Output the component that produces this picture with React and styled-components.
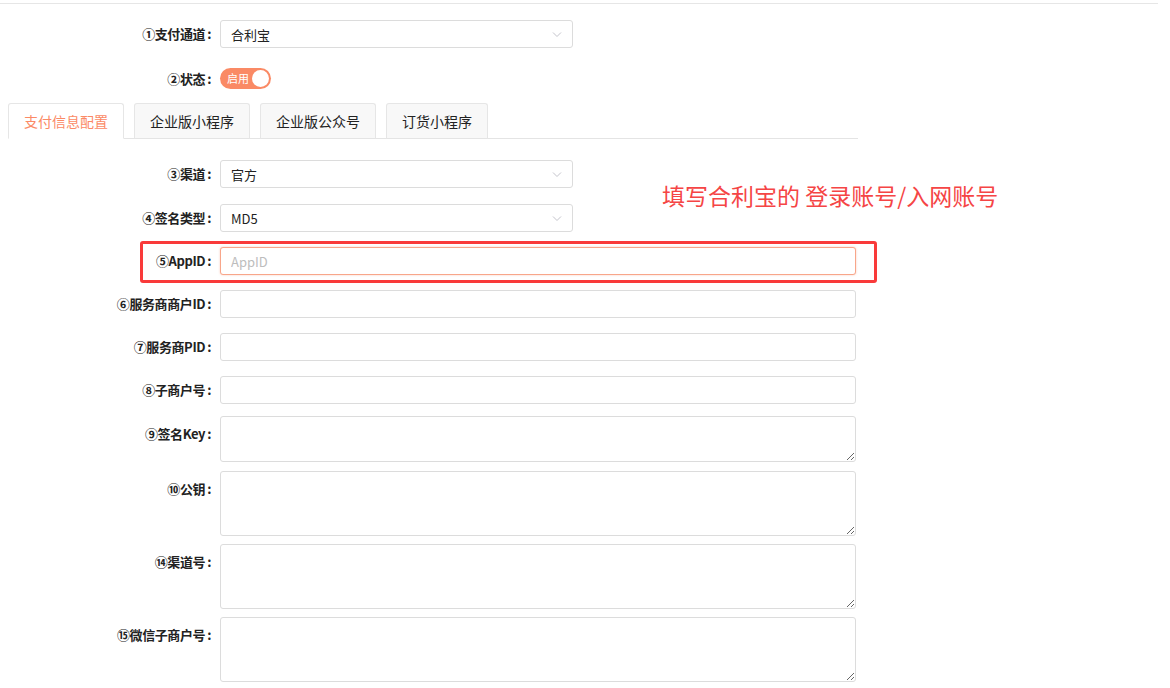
import styled, { createGlobalStyle } from 'styled-components';

const GlobalStyle = createGlobalStyle`
  body {
    margin: 0;
    background: #fff;
    font-family: "Noto Sans CJK SC", "Noto Sans", "Liberation Sans", sans-serif;
    color: #333;
  }
  *, *::before, *::after { box-sizing: border-box; }
`;

const Page = styled.div`
  position: relative;
  width: 1170px;
  min-height: 688px;
  padding-top: 3px;
`;

const TopRule = styled.div`
  height: 1px;
  width: 1158px;
  background: #e6e6e6;
`;

const Form = styled.form`
  width: 860px;
`;

const Row = styled.div`
  position: relative;
  display: grid;
  grid-template-columns: 213px ${(p) => (p.$short ? '353px' : '636px')};
  column-gap: 7px;
  margin-top: ${(p) => p.$top}px;

  ${(p) =>
    p.$marked &&
    `
    &::after {
      content: '';
      position: absolute;
      left: 140px;
      top: -6px;
      width: 737px;
      height: 42px;
      border: 3px solid #f93a3a;
      border-radius: 3px;
      pointer-events: none;
    }
  `}
`;

const Label = styled.label`
  text-align: right;
  font-size: 13px;
  font-weight: 700;
  line-height: 16px;
  letter-spacing: -0.4px;
  color: #222;
  white-space: nowrap;
  padding-right: 2px;
  padding-top: ${(p) => (p.$multi ? 10 : 6)}px;

  &::after {
    content: ':';
    margin-left: 2px;
  }
`;

const SelectBox = styled.div`
  position: relative;
  height: 28px;
  border: 1px solid #dcdcdc;
  border-radius: 3px;
  padding: 0 10px;
  font-size: 13px;
  line-height: 27px;
  color: #222;

  svg {
    position: absolute;
    right: 10px;
    top: 10px;
  }
`;

const TextInput = styled.input`
  height: 28px;
  width: 100%;
  border: 1px solid ${(p) => (p.$focused ? '#f8a68a' : '#dcdcdc')};
  box-shadow: ${(p) => (p.$focused ? '0 0 2px rgba(248, 140, 105, 0.5)' : 'none')};
  border-radius: 3px;
  padding: 0 10px;
  font: inherit;
  font-size: 13px;
  outline: none;

  &::placeholder {
    color: #bdbdbd;
  }
`;

const TextArea = styled.textarea`
  display: block;
  width: 100%;
  height: ${(p) => p.$h}px;
  border: 1px solid #dcdcdc;
  border-radius: 3px;
  padding: 6px 10px;
  font: inherit;
  font-size: 13px;
  outline: none;
`;

const Switch = styled.div`
  position: relative;
  width: 51px;
  height: 21px;
  border-radius: 11px;
  background: #fa8a65;
  color: #fff;
  font-size: 11px;
  line-height: 21px;
  padding-left: 7px;

  &::after {
    content: '';
    position: absolute;
    right: 2px;
    top: 2px;
    width: 17px;
    height: 17px;
    border-radius: 50%;
    background: #fff;
  }
`;

const SwitchLabel = styled(Label)`
  padding-top: 3px;
`;

const Tabs = styled.div`
  display: flex;
  gap: 10px;
  margin: 14px 0 0 8px;
  width: 850px;
  border-bottom: 1px solid #e4e4e4;
`;

const Tab = styled.div`
  height: 36px;
  padding: 0 15px;
  margin-bottom: -1px;
  font-size: 14px;
  line-height: 35px;
  border: 1px solid #e6e6e6;
  border-bottom-color: ${(p) => (p.$active ? '#fff' : '#e4e4e4')};
  border-radius: 3px 3px 0 0;
  background: ${(p) => (p.$active ? '#fff' : '#f8f8f8')};
  color: ${(p) => (p.$active ? '#fb8a66' : '#222')};
`;

const Note = styled.div`
  position: absolute;
  left: 662px;
  top: 179px;
  font-size: 23px;
  line-height: 32px;
  color: #f54545;
  white-space: nowrap;
`;

const Chevron = () => (
  <svg width="10" height="7" viewBox="0 0 10 7" fill="none">
    <path d="M1 1.5 L5 5.5 L9 1.5" stroke="#c4c4cc" strokeWidth="1" />
  </svg>
);

const SelectRow = ({ label, value, top }) => (
  <Row $top={top} $short>
    <Label>{label}</Label>
    <SelectBox>
      {value}
      <Chevron />
    </SelectBox>
  </Row>
);

const InputRow = ({ label, top, ...rest }) => (
  <Row $top={top} $marked={rest.$focused}>
    <Label>{label}</Label>
    <TextInput {...rest} />
  </Row>
);

const AreaRow = ({ label, top, h }) => (
  <Row $top={top}>
    <Label $multi>{label}</Label>
    <TextArea $h={h} />
  </Row>
);

export default function App() {
  return (
    <Page>
      <GlobalStyle />
      <TopRule />
      <Form>
        <SelectRow label="①支付通道" value="合利宝" top={16} />
        <Row $top={20}>
          <SwitchLabel>②状态</SwitchLabel>
          <Switch>启用</Switch>
        </Row>

        <Tabs>
          <Tab $active>支付信息配置</Tab>
          <Tab>企业版小程序</Tab>
          <Tab>企业版公众号</Tab>
          <Tab>订货小程序</Tab>
        </Tabs>

        <SelectRow label="③渠道" value="官方" top={21} />
        <SelectRow label="④签名类型" value="MD5" top={16} />
        <InputRow label="⑤AppID" top={15} placeholder="AppID" $focused />
        <InputRow label="⑥服务商商户ID" top={15} />
        <InputRow label="⑦服务商PID" top={15} />
        <InputRow label="⑧子商户号" top={15} />
        <AreaRow label="⑨签名Key" top={12} h={46} />
        <AreaRow label="⑩公钥" top={9} h={65} />
        <AreaRow label="⑭渠道号" top={8} h={65} />
        <AreaRow label="⑮微信子商户号" top={8} h={65} />
      </Form>

      <Note>填写合利宝的 登录账号/入网账号</Note>
    </Page>
  );
}
